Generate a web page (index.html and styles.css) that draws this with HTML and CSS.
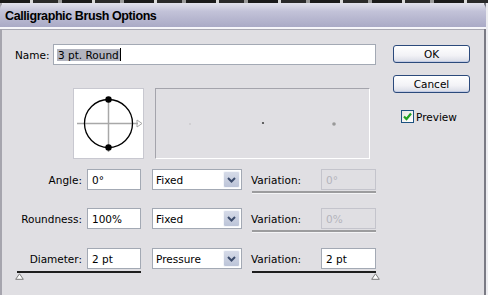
FILE: index.html
```html
<!DOCTYPE html>
<html>

<head>
    <meta charset="UTF-8">
    <title>Calligraphic Brush Options</title>
    <link rel="stylesheet" href="styles.css">
</head>

<body>
    <div class="strip"></div>
    <div class="window">
        <div class="titlebar"><span class="title">Calligraphic Brush Options</span></div>
        <div class="dlg">
            <div class="main">
                <!-- name -->
                <div class="name-row">
                    <span class="name-label">Name:</span>
                    <div class="field name-field"><span class="sel">3 pt. Round</span><span class="caret"></span></div>
                </div>
                <!-- previews -->
                <div class="previews">
                    <div class="tip-box">
                        <svg width="69" height="69" viewBox="0 0 69 69">
                            <line x1="3" y1="34.5" x2="64" y2="34.5" stroke="#a8a8a8" stroke-width="1.5" />
                            <polygon points="63,31 68,34.5 63,38" fill="none" stroke="#a8a8a8" stroke-width="1" />
                            <line x1="34.5" y1="8" x2="34.5" y2="63" stroke="#a8a8a8" stroke-width="1.5" />
                            <circle cx="34.5" cy="34.5" r="24" fill="none" stroke="#000" stroke-width="1.3" />
                            <circle cx="34.5" cy="10.5" r="3.2" fill="#000" />
                            <circle cx="34.5" cy="58.5" r="3.2" fill="#000" />
                        </svg>
                    </div>
                    <div class="stroke-box">
                        <svg width="213" height="69" viewBox="0 0 213 69">
                            <circle cx="34" cy="35" r="0.7" fill="#b8b8b8" />
                            <circle cx="107" cy="34" r="1.1" fill="#444" />
                            <circle cx="178" cy="35" r="1.8" fill="#999" />
                        </svg>
                    </div>
                </div>
                <!-- params -->
                <div class="param angle">
                    <span class="param-label">Angle:</span>
                    <div class="field short">0°</div>
                    <div class="select"><span>Fixed</span><span class="arrow"><svg width="9" height="6" viewBox="0 0 9 6"><polyline points="1,1 4.5,4.5 8,1" fill="none" stroke="#3c4c6c" stroke-width="2" /></svg></span></div>
                    <span class="var-label">Variation:</span>
                    <div class="field var off">0°</div>
                    <div class="slider gray"></div>
                </div>
                <div class="param round">
                    <span class="param-label">Roundness:</span>
                    <div class="field short">100%</div>
                    <div class="select"><span>Fixed</span><span class="arrow"><svg width="9" height="6" viewBox="0 0 9 6"><polyline points="1,1 4.5,4.5 8,1" fill="none" stroke="#3c4c6c" stroke-width="2" /></svg></span></div>
                    <span class="var-label">Variation:</span>
                    <div class="field var off">0%</div>
                    <div class="slider gray"></div>
                </div>
                <div class="param diam">
                    <span class="param-label">Diameter:</span>
                    <div class="field short">2 pt</div>
                    <div class="select"><span>Pressure</span><span class="arrow"><svg width="9" height="6" viewBox="0 0 9 6"><polyline points="1,1 4.5,4.5 8,1" fill="none" stroke="#3c4c6c" stroke-width="2" /></svg></span></div>
                    <span class="var-label">Variation:</span>
                    <div class="field var">2 pt</div>
                    <div class="slider black left">
                        <div class="line"></div>
                        <svg class="thumb" width="9" height="7" viewBox="0 0 9 7"><polygon points="4.5,0.8 8.3,6.3 0.7,6.3" fill="#fff" stroke="#7a7a7a" stroke-width="1" /></svg>
                    </div>
                    <div class="slider black right">
                        <div class="line"></div>
                        <svg class="thumb" width="9" height="7" viewBox="0 0 9 7"><polygon points="4.5,0.8 8.3,6.3 0.7,6.3" fill="#fff" stroke="#7a7a7a" stroke-width="1" /></svg>
                    </div>
                </div>
            </div>
            <div class="side">
                <button class="btn">OK</button>
                <button class="btn">Cancel</button>
                <div class="check">
                    <span class="box"><svg width="11" height="11" viewBox="0 0 11 11"><polyline points="2,5.5 4.5,8 9,2.5" fill="none" stroke="#21a121" stroke-width="2.2" /></svg></span>
                    <span>Preview</span>
                </div>
            </div>
        </div>
    </div>
</body>

</html>
```

FILE: styles.css
```css
html {
    background: #ececf0;
}

body {
    margin: 0;
    font-family: "DejaVu Sans", sans-serif;
    font-size: 10.5px;
    color: #000;
}

.strip {
    height: 3px;
    background: repeating-linear-gradient(90deg, #1a1a1a 0 30px, #d8d8d8 30px 33px, #2a2a2a 33px 58px, #9a9a9a 58px 62px);
}

.window {
    width: 482px;
    border-left: 2px solid #a6a5ae;
    border-right: 2px solid #7a7a84;
}

.titlebar {
    height: 24px;
    line-height: 26px;
    padding-left: 5px;
    margin-left: -2px;
    margin-right: -2px;
    border-radius: 6px 6px 0 0;
    background: linear-gradient(#e2e2ec, #c2c2d8 35%, #aaaac6 100%);
    border-bottom: 2px solid #f6f6fa;
}

.title {
    font-family: "Liberation Sans", Arial, sans-serif;
    font-weight: bold;
    font-size: 12.5px;
    letter-spacing: -0.4px;
    color: #000;
}

.dlg {
    display: flex;
    background: #e0dfe3;
    border-top: 1px solid #a8a8b2;
    height: 265px;
}

.main {
    width: 391px;
    padding-top: 14px;
}

.name-row {
    display: flex;
    align-items: center;
    padding-left: 13px;
    height: 21px;
}

.name-label {
    width: 38px;
}

.field {
    height: 21px;
    box-sizing: border-box;
    border: 1px solid #a3a9b4;
    background: #fff;
    padding: 0 4px;
    display: flex;
    align-items: center;
}

.name-field {
    width: 323px;
    padding-left: 3px;
}

.sel {
    background: #b2b4bf;
    padding: 0 1px;
}

.caret {
    width: 1px;
    height: 13px;
    background: #000;
}

.previews {
    display: flex;
    margin-top: 23px;
    height: 71px;
}

.tip-box {
    margin-left: 71px;
    width: 71px;
    height: 71px;
    box-sizing: border-box;
    border: 1px solid #c8c8d0;
    background: #fff;
}

.tip-box svg,
.stroke-box svg {
    display: block;
}

.stroke-box {
    margin-left: 11px;
    width: 215px;
    height: 71px;
    box-sizing: border-box;
    border-top: 1px solid #a4a4ac;
    border-left: 1px solid #a4a4ac;
    border-right: 1px solid #fff;
    border-bottom: 1px solid #fff;
}

.param {
    display: grid;
    grid-template-columns: 85px 65px 99px 70px 55px;
    grid-template-rows: 21px auto;
    align-items: center;
}

.angle {
    margin-top: 10px;
}

.round {
    margin-top: 14px;
}

.diam {
    margin-top: 15px;
}

.param-label {
    text-align: right;
    padding-right: 5px;
}

.field.short {
    width: 54px;
}

.field.var {
    width: 55px;
}

.field.off {
    background: #e0dfe3;
    border-color: #c4c4cc;
    color: #b4b4bc;
}

.select {
    width: 90px;
    height: 21px;
    box-sizing: border-box;
    border: 1px solid #a3a9b4;
    background: #fff;
    display: flex;
    align-items: center;
    justify-content: space-between;
    padding-left: 3px;
}

.select .arrow {
    width: 17px;
    height: 17px;
    margin-right: 1px;
    border: 1px solid #f4f6fa;
    box-sizing: border-box;
    border-radius: 2px;
    background: linear-gradient(#d6dbe8, #bcc4d8);
    display: flex;
    align-items: center;
    justify-content: center;
}

.slider {
    grid-row: 2;
    align-self: start;
}

.slider.gray {
    grid-column: 4 / 6;
    margin-left: 1px;
    margin-top: 1px;
    width: 124px;
    height: 2px;
    background: #9c9c9e;
    border-bottom: 1px solid #f4f4f6;
}

.slider.black {
    width: 124px;
    margin-top: 2px;
    display: flex;
    flex-direction: column;
}

.slider.black .line {
    height: 2px;
    background: #1e1e1e;
}

.slider.left {
    grid-column: 1 / 3;
    margin-left: 15px;
}

.slider.left .thumb {
    margin-left: -2px;
}

.slider.right {
    grid-column: 4 / 6;
    margin-left: 1px;
}

.slider.right .thumb {
    align-self: flex-end;
    margin-right: -4px;
}

.side {
    display: flex;
    flex-direction: column;
    align-items: flex-start;
    padding-top: 15px;
}

.btn {
    width: 77px;
    height: 18px;
    padding: 0;
    margin: 0;
    border: 1px solid #2b4a7c;
    border-radius: 3px;
    background: linear-gradient(#ffffff, #f2f2f6 60%, #d8dbe6);
    box-shadow: inset 0 -1px 0 #c2cbe4;
    font-family: "DejaVu Sans", sans-serif;
    font-size: 10.5px;
    color: #000;
}

.btn + .btn {
    margin-top: 12px;
}

.check {
    display: flex;
    align-items: center;
    margin-top: 17px;
    margin-left: 8px;
}

.check .box {
    width: 13px;
    height: 13px;
    box-sizing: border-box;
    border: 1px solid #1c5180;
    background: linear-gradient(135deg, #e6e6e0, #fff);
    display: flex;
    align-items: center;
    justify-content: center;
    margin-right: 2px;
}
```
